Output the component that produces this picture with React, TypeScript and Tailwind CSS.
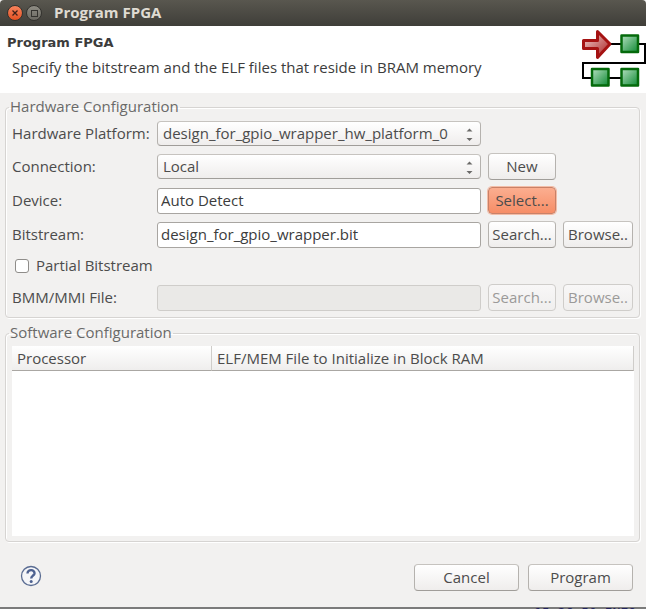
import { useState } from "react";
import type { ReactNode } from "react";

const buttonBase =
  "h-[27px] rounded-[4px] border whitespace-nowrap pb-[2px] text-center leading-[20px]";
const buttonNormal =
  "border-[#b5b2ae] border-t-[#c6c3bf] border-b-[#a09d99] bg-gradient-to-b from-white to-[#efedec] text-[#4c4c4c]";
const buttonDisabled =
  "border-[#cfcdca] bg-gradient-to-b from-[#f8f7f7] to-[#f0efee] text-[#9b9a99]";
const buttonFocus =
  "border-[#c98167] bg-gradient-to-b from-[#fbae90] to-[#f68d66] text-[#4c4c4c] ring-1 ring-[#f3bda8]";

function Button({
  children,
  kind = "normal",
  className = "",
}: {
  children: ReactNode;
  kind?: "normal" | "disabled" | "focus";
  className?: string;
}) {
  const look =
    kind === "disabled" ? buttonDisabled : kind === "focus" ? buttonFocus : buttonNormal;
  return (
    <button
      type="button"
      disabled={kind === "disabled"}
      className={`${buttonBase} ${look} ${className}`}
    >
      {children}
    </button>
  );
}

function Select({ id, value }: { id: string; value: string }) {
  return (
    <div className="relative min-w-0">
      <select
        id={id}
        className="block h-[25px] w-full appearance-none rounded-[4px] border border-[#b5b2ae] border-t-[#c6c3bf] border-b-[#a09d99] bg-gradient-to-b from-white to-[#efedec] pr-6 pb-[2px] pl-[5px] text-[#4c4c4c]"
      >
        <option>{value}</option>
      </select>
      <svg
        viewBox="0 0 7 13"
        className="pointer-events-none absolute top-[7px] right-[8px] h-[13px] w-[7px] fill-[#6b6a68]"
      >
        <path d="M0.500 3.500 3.500 0.500 6.500 3.500zM0.500 10 3.500 13 6.500 10z" />
      </svg>
    </div>
  );
}

function Logo() {
  return (
    <svg viewBox="0 0 64 60" className="h-[60px] w-[64px] shrink-0" aria-hidden="true">
      <defs>
        <linearGradient id="red" x1="0" y1="0" x2="1" y2="1">
          <stop offset="0" stopColor="#f3d6d6" />
          <stop offset="1" stopColor="#a81c1c" />
        </linearGradient>
        <linearGradient id="green" x1="0" y1="0" x2="1" y2="1">
          <stop offset="0" stopColor="#b4dfc0" />
          <stop offset="1" stopColor="#0f8a34" />
        </linearGradient>
      </defs>
      <path d="M28 16H63V35H1V50H40" fill="none" stroke="#000" strokeWidth="2" />
      <path
        d="M1.500 12.500H15.500V3.500L28 16 15.500 29.500V20.500H1.500z"
        fill="url(#red)"
        stroke="#a51212"
        strokeWidth="3"
        strokeLinejoin="round"
      />
      <g fill="url(#green)" stroke="#046a0b" strokeWidth="2.500" strokeLinejoin="round">
        <rect x="39.500" y="7.500" width="16.500" height="16.500" />
        <rect x="10" y="41" width="16.500" height="16.500" />
        <rect x="39.500" y="41" width="16.500" height="16.500" />
      </g>
    </svg>
  );
}

const fieldsetClass =
  "mr-[6px] ml-[5px] min-w-0 rounded-[4px] border border-[#d6d4d2] pr-[5px] pl-[6px] shadow-[1px_1px_0_#fff,inset_1px_1px_0_#fff]";
const legendClass = "-ml-[3px] px-px pb-[2px] leading-[18px] text-[#6a6a69]";
const labelClass = "col-start-1 whitespace-nowrap pb-[2px]";
const inputClass =
  "h-[26px] w-full min-w-0 rounded-[3px] border px-[3px] pb-[2px] leading-[20px]";
const headCellClass =
  "border-r border-b border-r-[#cfcdca] border-b-[#aaa7a3] p-0 pb-px pl-[5px] font-normal";

export default function App() {
  const [device, setDevice] = useState("Auto Detect");
  const [bitstream, setBitstream] = useState("design_for_gpio_wrapper.bit");
  return (
    <main className="flex min-h-screen flex-col bg-[#f2f1f0] font-['Open_Sans',sans-serif] text-[15px] leading-[20px] text-[#4c4c4c]">
      <div className="flex h-[26px] items-center rounded-t-[4px] bg-gradient-to-b from-[#59574f] to-[#3f3e39] pl-[7px]">
        <button
          type="button"
          aria-label="Close"
          className="flex size-4 items-center justify-center rounded-full border border-[#33322e] bg-gradient-to-b from-[#f7835c] to-[#e2501f]"
        >
          <svg viewBox="0 0 6 6" className="size-[6px] stroke-[#3e2118]">
            <path d="M0.500 0.500l5 5M5.500 0.500l-5 5" strokeWidth="1.300" />
          </svg>
        </button>
        <button
          type="button"
          aria-label="Maximize"
          className="ml-[3px] flex size-4 items-center justify-center rounded-full border border-[#33322e] bg-gradient-to-b from-[#8f8d84] to-[#6a6861]"
        >
          <span className="size-[7px] border border-[#34332f]" />
        </button>
        <h1 className="ml-[12px] pb-[2px] font-bold text-[#dfdbd2]">Program FPGA</h1>
      </div>

      <header className="flex h-[67px] justify-between bg-white">
        <div className="min-w-0 pt-[7px] pl-[7px]">
          <h2 className="font-['DejaVu_Sans',sans-serif] text-[13px] leading-[20px] font-bold text-[#3c3c3c]">
            Program FPGA
          </h2>
          <p className="mt-[4px] pl-[5px] text-[#3c3c3c]">
            Specify the bitstream and the ELF files that reside in BRAM memory
          </p>
        </div>
        <div className="pt-[2px]">
          <Logo />
        </div>
      </header>

      <fieldset className={`${fieldsetClass} mt-[4px] pt-[4px] pb-[6px]`}>
        <legend className={legendClass}>Hardware Configuration</legend>
        <div className="grid grid-cols-[138px_minmax(0,1fr)_68px_70px] items-center gap-[7px] pr-px">
          <label htmlFor="platform" className={labelClass}>
            Hardware Platform:
          </label>
          <Select id="platform" value="design_for_gpio_wrapper_hw_platform_0" />
          <label htmlFor="connection" className={labelClass}>
            Connection:
          </label>
          <Select id="connection" value="Local" />
          <Button>New</Button>
          <label htmlFor="device" className={labelClass}>
            Device:
          </label>
          <input
            id="device"
            value={device}
            onChange={(e) => setDevice(e.target.value)}
            className={`${inputClass} border-[#a8a5a1] bg-white text-[#3c3c3c]`}
          />
          <Button kind="focus">Select...</Button>
          <label htmlFor="bitstream" className={labelClass}>
            Bitstream:
          </label>
          <input
            id="bitstream"
            value={bitstream}
            onChange={(e) => setBitstream(e.target.value)}
            className={`${inputClass} border-[#a8a5a1] bg-white text-[#3c3c3c]`}
          />
          <Button>Search...</Button>
          <Button>Browse..</Button>
          <label className="col-span-4 flex h-[22px] items-center gap-[7px] pl-[3px]">
            <input
              type="checkbox"
              className="size-[14px] appearance-none rounded-[3px] border border-[#8f8d8a] bg-white checked:bg-[#f07746]"
            />
            <span className="pb-[2px]">Partial Bitstream</span>
          </label>
          <label htmlFor="bmm" className={labelClass}>
            BMM/MMI File:
          </label>
          <input
            id="bmm"
            disabled
            className={`${inputClass} border-[#cfcdca] bg-[#eae9e7]`}
          />
          <Button kind="disabled">Search...</Button>
          <Button kind="disabled">Browse..</Button>
        </div>
      </fieldset>

      <fieldset className={`${fieldsetClass} mt-[5px] flex flex-1 flex-col pt-[3px] pb-[5px]`}>
        <legend className={legendClass}>Software Configuration</legend>
        <div className="min-h-[190px] flex-1 bg-white">
          <table className="w-full table-fixed border-separate border-spacing-0 text-left">
            <thead>
              <tr className="h-[25px] bg-gradient-to-b from-white to-[#eeedec]">
                <th className={`w-[200px] ${headCellClass}`}>Processor</th>
                <th className={headCellClass}>ELF/MEM File to Initialize in Block RAM</th>
              </tr>
            </thead>
            <tbody />
          </table>
        </div>
      </fieldset>

      <footer className="flex items-center justify-between pt-[22px] pr-[13px] pb-[16px] pl-[20px]">
        <button type="button" aria-label="Help" className="pb-[3px]">
          <svg viewBox="0 0 22 22" className="size-[22px]">
            <circle cx="11" cy="11" r="9.500" fill="#f4f5f8" stroke="#5a6c92" strokeWidth="1.300" />
            <path
              d="M7.500 8.500C7.500 3.800 15 4.200 14.500 8.500 14.200 10.500 11.300 11 11.200 13.500"
              fill="none"
              stroke="#4d6190"
              strokeWidth="2.400"
            />
            <circle cx="11.200" cy="16.500" r="1.500" fill="#4d6190" />
          </svg>
        </button>
        <div className="flex gap-[9px]">
          <Button className="w-[105px]">Cancel</Button>
          <Button className="w-[105px]">Program</Button>
        </div>
      </footer>

      <div className="flex h-[2px] justify-end overflow-hidden bg-[#7b7b7b] pr-[10px]">
        <span className="font-['DejaVu_Sans_Mono',monospace] text-[13px] leading-[12px] text-[#22225e]">
          15:26:50 INFO
        </span>
      </div>
    </main>
  );
}
